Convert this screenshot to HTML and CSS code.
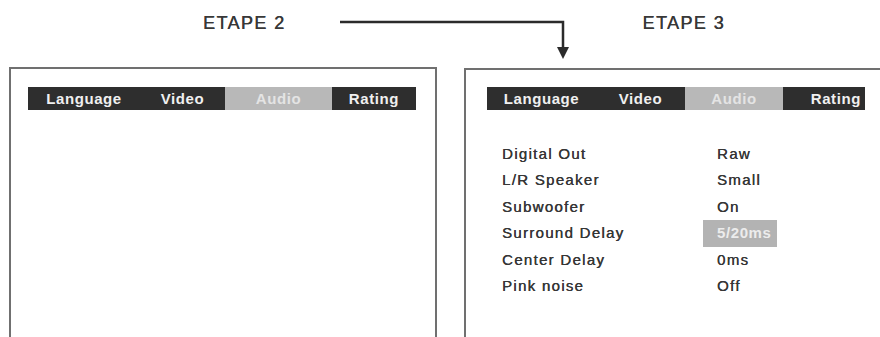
FILE: index.html
```html
<!DOCTYPE html>
<html lang="fr">
<head>
    <meta charset="UTF-8">
    <meta name="viewport" content="width=device-width, initial-scale=1.0">
    <title>Menu Audio - Etapes</title>
    <link rel="stylesheet" href="styles.css">
</head>
<body>
    <div class="page">
        <!-- Titres des etapes -->
        <header class="steps">
            <span class="step step-2">ETAPE 2</span>
            <span class="step step-3">ETAPE 3</span>
        </header>

        <!-- Fleche entre les etapes -->
        <svg class="arrow" width="880" height="67" viewBox="0 0 880 67">
            <polyline points="340,22 563,22 563,50" fill="none" stroke="#2b2b2b" stroke-width="2.5"/>
            <polygon points="557,47 569,47 563,59" fill="#2b2b2b"/>
        </svg>

        <main class="screens">
            <!-- Ecran etape 2 -->
            <section class="screen screen-left">
                <div class="tabs">
                    <div class="tab">Language</div>
                    <div class="tab">Video</div>
                    <div class="tab active">Audio</div>
                    <div class="tab">Rating</div>
                </div>
            </section>

            <!-- Ecran etape 3 -->
            <section class="screen screen-right">
                <div class="tabs">
                    <div class="tab">Language</div>
                    <div class="tab">Video</div>
                    <div class="tab active">Audio</div>
                    <div class="tab">Rating</div>
                </div>
                <ul class="settings">
                    <li><span class="label">Digital Out</span><span class="value">Raw</span></li>
                    <li><span class="label">L/R Speaker</span><span class="value">Small</span></li>
                    <li><span class="label">Subwoofer</span><span class="value">On</span></li>
                    <li><span class="label">Surround Delay</span><span class="value selected">5/20ms</span></li>
                    <li><span class="label">Center Delay</span><span class="value">0ms</span></li>
                    <li><span class="label">Pink noise</span><span class="value">Off</span></li>
                </ul>
            </section>
        </main>
    </div>
</body>
</html>
```

FILE: styles.css
```css
/* Estilo Geral */
html, body {
    margin: 0;
    padding: 0;
    background: #fff;
}

body {
    width: 880px;
    height: 337px;
    overflow: hidden;
    font-family: "Liberation Sans", Arial, sans-serif;
    color: #444;
}

.page {
    position: relative;
    width: 880px;
    height: 337px;
}

/* Titres */
.steps {
    display: flex;
    height: 67px;
    box-sizing: border-box;
    padding: 14px 0 0 203px;
}

.step {
    font-size: 18px;
    line-height: 18px;
    letter-spacing: 1.4px;
    color: #383838;
    text-shadow: 0.3px 0 0 #383838;
}

.step-3 {
    margin-left: 357px;
}

.arrow {
    position: absolute;
    top: 0;
    left: 0;
}

/* Ecrans */
.screens {
    display: flex;
    gap: 27px;
    padding-left: 9px;
}

.screen {
    flex-shrink: 0;
    box-sizing: border-box;
    height: 270px;
    border: 2px solid #707070;
    border-bottom: none;
    padding-top: 18px;
}

.screen-left {
    width: 428px;
    padding-left: 17px;
}

.screen-right {
    width: 440px;
    height: 269px;
    margin-top: 1px;
    padding-top: 17px;
    padding-left: 21px;
}

/* Onglets */
.tabs {
    display: grid;
    height: 22px;
}

.screen-left .tabs {
    grid-template-columns: 112px 85px 107px 84px;
}

.screen-right .tabs {
    grid-template-columns: 109px 89px 98px 82px;
}

.tab {
    background: #2e2e2e;
    color: #f0f0f0;
    font-size: 15px;
    font-weight: bold;
    letter-spacing: 0.6px;
    line-height: 23px;
    text-align: center;
}

.tab.active {
    background: #b8b8b8;
    color: #e4e4e4;
}

.screen-right .tab:last-child {
    text-align: right;
    padding-right: 4px;
}

/* Reglages */
.settings {
    list-style: none;
    margin: 32px 0 0 15px;
    padding: 0;
}

.settings li {
    display: flex;
    height: 26.4px;
    line-height: 26.4px;
    font-size: 15px;
    letter-spacing: 1.3px;
    color: #363636;
    text-shadow: 0.3px 0 0 #363636;
}

.label {
    width: 201px;
}

.value {
    padding: 0 6px 0 14px;
}

.value.selected {
    background: #b3b3b3;
    color: #ececec;
    font-weight: bold;
    letter-spacing: 0.6px;
    text-shadow: none;
}
```
